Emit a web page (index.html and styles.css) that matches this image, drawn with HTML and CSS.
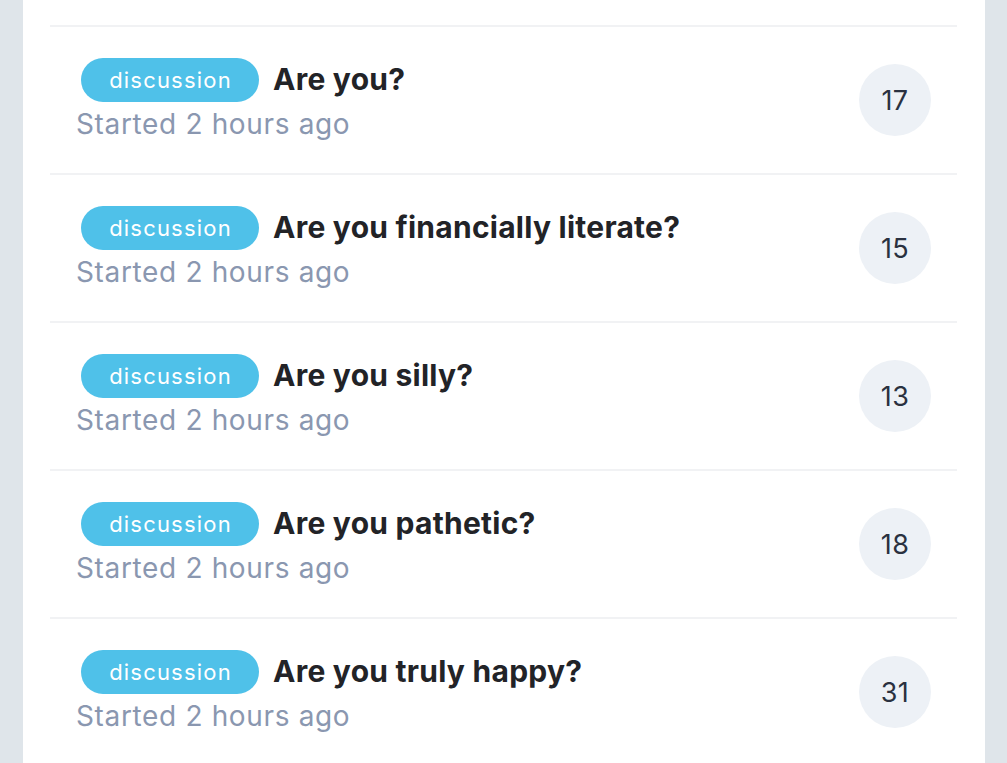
FILE: index.html
```html
<!DOCTYPE html>
<html>
<head>
<meta charset="utf-8">
<link rel="stylesheet" href="styles.css">
</head>
<body>
<div class="page">
  <div class="card">
    <ul class="list">
      <li class="row">
        <div class="info">
          <div class="head"><span class="badge">discussion</span><span class="title">Are you?</span></div>
          <div class="meta">Started 2 hours ago</div>
        </div>
        <div class="count">17</div>
      </li>
      <li class="row">
        <div class="info">
          <div class="head"><span class="badge">discussion</span><span class="title">Are you financially literate?</span></div>
          <div class="meta">Started 2 hours ago</div>
        </div>
        <div class="count">15</div>
      </li>
      <li class="row">
        <div class="info">
          <div class="head"><span class="badge">discussion</span><span class="title">Are you silly?</span></div>
          <div class="meta">Started 2 hours ago</div>
        </div>
        <div class="count">13</div>
      </li>
      <li class="row">
        <div class="info">
          <div class="head"><span class="badge">discussion</span><span class="title">Are you pathetic?</span></div>
          <div class="meta">Started 2 hours ago</div>
        </div>
        <div class="count">18</div>
      </li>
      <li class="row">
        <div class="info">
          <div class="head"><span class="badge">discussion</span><span class="title">Are you truly happy?</span></div>
          <div class="meta">Started 2 hours ago</div>
        </div>
        <div class="count">31</div>
      </li>
    </ul>
  </div>
</div>
</body>
</html>
```

FILE: styles.css
```css
html, body {
  margin: 0;
  padding: 0;
  background: #dfe5ea;
  font-family: Inter, "Noto Sans", sans-serif;
}
.page {
  padding: 0 22px 0 23px;
  height: 763px;
  overflow: hidden;
}
.card {
  background: #ffffff;
  padding: 25px 28px 40px 27px;
  min-height: 738px;
}
.list {
  list-style: none;
  margin: 0;
  padding: 0;
}
.row {
  display: flex;
  align-items: center;
  justify-content: space-between;
  border-top: 2px solid #f1f2f4;
  padding: 31px 26px 31px 26px;
}
.info {
  display: flex;
  flex-direction: column;
}
.head {
  display: flex;
  align-items: center;
  height: 44px;
}
.badge {
  display: inline-flex;
  align-items: center;
  justify-content: center;
  margin-left: 5px;
  width: 178px;
  height: 44px;
  border-radius: 22px;
  background: #4fc1e9;
  color: #ffffff;
  font-size: 22px;
  letter-spacing: 1.2px;
  text-indent: 1px;
}
.title {
  margin-left: 14px;
  padding-bottom: 3px;
  font-size: 30px;
  font-weight: 700;
  letter-spacing: 0.25px;
  color: #222327;
}
.meta {
  font-size: 28px;
  letter-spacing: 0.65px;
  line-height: 44px;
  margin-bottom: -4px;
  color: #8a97b0;
}
.count {
  width: 72px;
  height: 72px;
  border-radius: 50%;
  background: #edf1f6;
  display: flex;
  align-items: center;
  justify-content: center;
  font-size: 27px;
  letter-spacing: 0.4px;
  color: #2a3140;
}
```
